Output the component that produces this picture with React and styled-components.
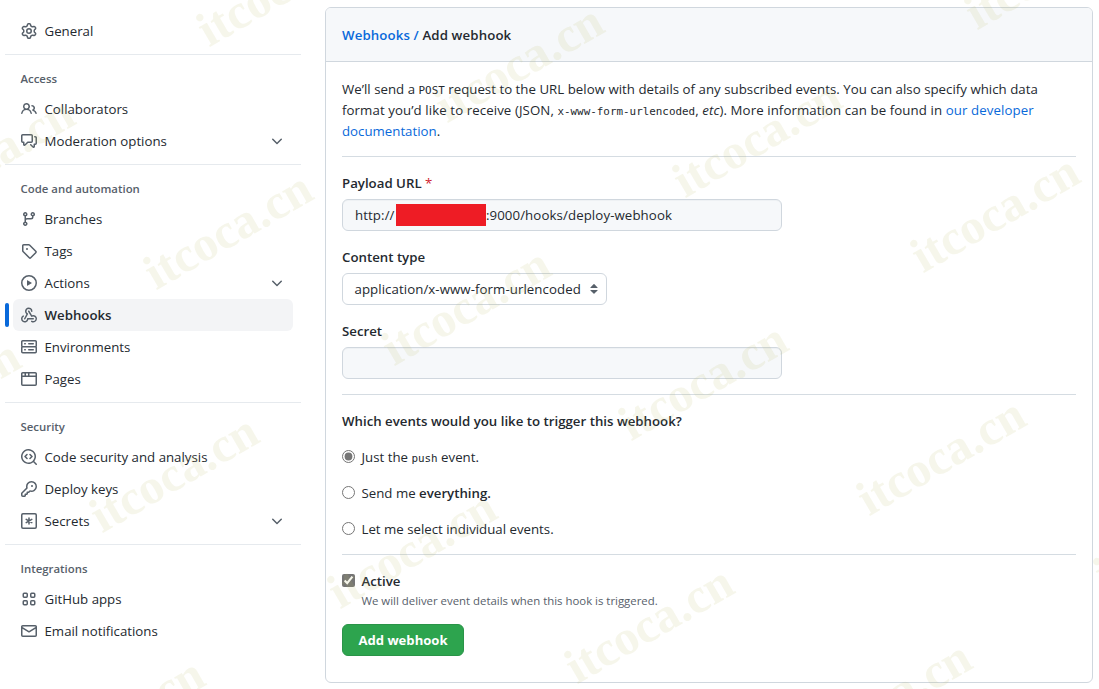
import React from "react";
import styled, { createGlobalStyle, css } from "styled-components";

const GlobalStyle = createGlobalStyle`
  *, *::before, *::after { box-sizing: border-box; }
  body {
    margin: 0;
    background: #fff;
    color: #24292f;
    font: 400 13.25px/21px "Open Sans", "Noto Sans", sans-serif;
  }
`;

const Page = styled.div`
  position: relative;
  display: flex;
  align-items: flex-start;
  gap: 24px;
  width: 1099px;
  height: 689px;
  overflow: hidden;
  padding: 7px 6px 0 5px;
`;

const Sidebar = styled.nav`
  flex: none;
  width: 296px;
  padding-top: 8px;
`;

const NavSection = styled.section`
  & + & {
    margin-top: 7px;
    border-top: 1px solid #e6eaee;
  }
`;

const NavHeading = styled.h3`
  margin: 0;
  padding: 15px 15.5px 5px;
  color: #57606a;
  font-size: 11.4px;
  font-weight: 600;
  line-height: 18px;
`;

const NavItem = styled.a`
  position: relative;
  display: flex;
  align-items: center;
  gap: 7.5px;
  height: 32px;
  margin: 0 8px;
  padding: 0 8px;
  border-radius: 6px;
  ${(p) =>
    p.$active &&
    css`
      background: #f3f4f6;
      font-weight: 600;
      &::before {
        content: "";
        position: absolute;
        top: 4px;
        left: -8px;
        width: 4px;
        height: 24px;
        border-radius: 6px;
        background: #0969da;
      }
    `}
`;

const NavLabel = styled.span`
  flex: 1;
  line-height: 22px;
  white-space: nowrap;
`;

const Glyph = styled.svg`
  flex: none;
  width: 16px;
  height: 16px;
  fill: #57606a;
`;

const Card = styled.main`
  flex: none;
  width: 768px;
  height: 676px;
  border: 1px solid #d0d7de;
  border-radius: 6px;
  overflow: hidden;
`;

const CardHeader = styled.header`
  height: 54px;
  padding: 16px;
  border-bottom: 1px solid #d0d7de;
  background: #f6f8fa;
  font-weight: 600;
  line-height: 22px;
  letter-spacing: 0.12px;
`;

const CardBody = styled.div`
  padding: 17px 16px;
`;

const Link = styled.a`
  color: #0969da;
`;

const Intro = styled.p`
  margin: 0 0 14px;
  white-space: nowrap;
`;

const Line = styled.span`
  display: block;
  letter-spacing: ${(p) => p.$tracking || 0}px;
`;

const Code = styled.code`
  font: 10.9px/1 "DejaVu Sans Mono", monospace;
  letter-spacing: 0;
`;

const Rule = styled.hr`
  height: 1px;
  margin: 0;
  border: 0;
  background: #d5dce2;
`;

const Form = styled.form`
  display: flex;
  flex-direction: column;
`;

const Field = styled.div`
  display: flex;
  flex-direction: column;
  align-items: flex-start;
  gap: 6px;
  margin-top: 16px;
`;

const Fields = styled.div`
  margin-bottom: 15px;
`;

const FieldLabel = styled.label`
  font-weight: 600;
  line-height: 20px;
`;

const Required = styled.span`
  color: #cf222e;
  font-weight: 400;
`;

const TextBox = styled.div`
  display: flex;
  align-items: center;
  width: 440px;
  height: 32px;
  padding: 0 12px;
  border: 1px solid #d0d7de;
  border-radius: 6px;
  background: #f6f8fa;
  box-shadow: inset 0 1px 0 rgba(208, 215, 222, 0.2);
  letter-spacing: 0.1px;
`;

const Redaction = styled.span`
  width: 90px;
  height: 22px;
  margin-left: 1.3px;
  background: #ee1c25;
`;

const SelectBox = styled.div`
  display: flex;
  align-items: center;
  justify-content: space-between;
  width: 265px;
  height: 32px;
  padding: 0 4px 0 11.5px;
  border: 1px solid #d0d7de;
  border-radius: 6px;
  letter-spacing: 0.07px;
`;

const Question = styled.h4`
  margin: 16px 0 0;
  font-size: 13.25px;
  font-weight: 600;
  line-height: 21px;
`;

const Choices = styled.div`
  display: flex;
  flex-direction: column;
  gap: 15px;
  margin: 15px 0 14px;
`;

const Choice = styled.label`
  display: flex;
  align-items: center;
  gap: 6.5px;
  height: 21px;
  font-weight: ${(p) => (p.$strong ? 600 : 400)};
`;

const Toggle = styled.input`
  flex: none;
  width: 13px;
  height: 13px;
  margin: 0;
  accent-color: #757575;
  transform: translateY(-1px);
`;

const ActiveGroup = styled.div`
  margin-top: 16px;
`;

const Note = styled.p`
  margin: 0 0 0 19.5px;
  color: #57606a;
  font-size: 11.4px;
  line-height: 18px;
`;

const SubmitButton = styled.button`
  align-self: flex-start;
  width: 122px;
  height: 32px;
  margin-top: 14px;
  padding: 0 0 1px;
  border: 1px solid #2a9448;
  border-radius: 6px;
  background: #2da44e;
  color: #fff;
  font: 700 13.1px/20px "Open Sans", sans-serif;
`;

const WatermarkLayer = styled.div`
  position: absolute;
  inset: 0;
  overflow: hidden;
  pointer-events: none;
`;

const Watermark = styled.span`
  position: absolute;
  left: ${(p) => p.$x}px;
  top: ${(p) => p.$y}px;
  color: rgba(186, 186, 108, 0.135);
  font: 700 49.3px/50px "Liberation Serif", serif;
  white-space: nowrap;
  transform: translate(9px, -40.5px) rotate(-30deg);
  transform-origin: 0 41px;
`;

const ICONS = {
  gear: "M8 0a8.2 8.2 0 0 1 .701.031C9.444.095 9.99.645 10.16 1.29l.288 1.107c.018.066.079.158.212.224.231.114.454.243.668.386.123.082.233.09.299.071l1.103-.303c.644-.176 1.392.021 1.82.63.27.385.506.792.704 1.218.315.675.111 1.422-.364 1.891l-.814.806c-.049.048-.098.147-.088.294.016.257.016.515 0 .772-.01.147.038.246.088.294l.814.806c.475.469.679 1.216.364 1.891a7.977 7.977 0 0 1-.704 1.217c-.428.61-1.176.807-1.82.63l-1.102-.302c-.067-.019-.177-.011-.3.071a5.909 5.909 0 0 1-.668.386c-.133.066-.194.158-.211.224l-.29 1.106c-.168.646-.715 1.196-1.458 1.26a8.006 8.006 0 0 1-1.402 0c-.743-.064-1.289-.614-1.458-1.26l-.289-1.106c-.018-.066-.079-.158-.212-.224a5.738 5.738 0 0 1-.668-.386c-.123-.082-.233-.09-.299-.071l-1.103.303c-.644.176-1.392-.021-1.82-.63a8.12 8.12 0 0 1-.704-1.218c-.315-.675-.111-1.422.363-1.891l.815-.806c.05-.048.098-.147.088-.294a6.214 6.214 0 0 1 0-.772c.01-.147-.038-.246-.088-.294l-.815-.806C.635 6.045.431 5.298.746 4.623a7.92 7.92 0 0 1 .704-1.217c.428-.61 1.176-.807 1.82-.63l1.102.302c.067.019.177.011.3-.071.214-.143.437-.272.668-.386.133-.066.194-.158.211-.224l.29-1.106C6.009.645 6.556.095 7.299.03 7.53.01 7.764 0 8 0Zm-.571 1.525c-.036.003-.108.036-.137.146l-.289 1.105c-.147.561-.549.967-.998 1.189-.173.086-.34.183-.5.29-.417.278-.97.423-1.529.27l-1.103-.303c-.109-.03-.175.016-.195.045-.22.312-.412.644-.573.99-.014.031-.021.11.059.19l.815.806c.411.406.562.957.53 1.456a4.709 4.709 0 0 0 0 .582c.032.499-.119 1.05-.53 1.456l-.815.806c-.081.08-.073.159-.059.19.162.346.353.677.573.989.02.03.085.076.195.046l1.102-.303c.56-.153 1.113-.008 1.53.27.161.107.328.204.501.29.447.222.85.629.997 1.189l.289 1.105c.029.109.101.143.137.146a6.6 6.6 0 0 0 1.142 0c.036-.003.108-.036.137-.146l.289-1.105c.147-.561.549-.967.998-1.189.173-.086.34-.183.5-.29.417-.278.97-.423 1.529-.27l1.103.303c.109.029.175-.016.195-.045.22-.313.411-.644.573-.99.014-.031.021-.11-.059-.19l-.815-.806c-.411-.406-.562-.957-.53-1.456a4.709 4.709 0 0 0 0-.582c-.032-.499.119-1.05.53-1.456l.815-.806c.081-.08.073-.159.059-.19a6.464 6.464 0 0 0-.573-.989c-.02-.03-.085-.076-.195-.046l-1.102.303c-.56.153-1.113.008-1.53-.27a4.44 4.44 0 0 0-.501-.29c-.447-.222-.85-.629-.997-1.189l-.289-1.105c-.029-.11-.101-.143-.137-.146a6.6 6.6 0 0 0-1.142 0ZM11 8a3 3 0 1 1-6 0 3 3 0 0 1 6 0ZM9.5 8a1.5 1.5 0 1 0-3.001.001A1.5 1.5 0 0 0 9.5 8Z",
  people: "M2 5.5a3.5 3.5 0 1 1 5.898 2.549 5.508 5.508 0 0 1 3.034 4.084.75.75 0 1 1-1.482.235 4 4 0 0 0-7.9 0 .75.75 0 0 1-1.482-.236A5.507 5.507 0 0 1 3.102 8.05 3.493 3.493 0 0 1 2 5.5ZM11 4a3.001 3.001 0 0 1 2.22 5.018 5.01 5.01 0 0 1 2.56 3.012.749.749 0 0 1-.885.954.752.752 0 0 1-.549-.514 3.507 3.507 0 0 0-2.522-2.372.75.75 0 0 1-.574-.73v-.352a.75.75 0 0 1 .416-.672A1.5 1.5 0 0 0 11 5.5.75.75 0 0 1 11 4Zm-5.5-.5a2 2 0 1 0-.001 3.999A2 2 0 0 0 5.5 3.5Z",
  discussion: "M1.75 1h8.5c.966 0 1.75.784 1.75 1.75v5.5A1.75 1.75 0 0 1 10.25 10H7.061l-2.574 2.573A1.458 1.458 0 0 1 2 11.543V10h-.25A1.75 1.75 0 0 1 0 8.25v-5.5C0 1.784.784 1 1.75 1ZM1.5 2.75v5.5c0 .138.112.25.25.25h1a.75.75 0 0 1 .75.75v2.19l2.72-2.72a.749.749 0 0 1 .53-.22h3.5a.25.25 0 0 0 .25-.25v-5.5a.25.25 0 0 0-.25-.25h-8.5a.25.25 0 0 0-.25.25Zm13 2a.25.25 0 0 0-.25-.25h-.5a.75.75 0 0 1 0-1.5h.5c.966 0 1.75.784 1.75 1.75v5.5A1.75 1.75 0 0 1 14.25 12H14v1.543a1.458 1.458 0 0 1-2.487 1.03L9.22 12.28a.749.749 0 0 1 .326-1.275.749.749 0 0 1 .734.215l2.22 2.22v-2.19a.75.75 0 0 1 .75-.75h1a.25.25 0 0 0 .25-.25Z",
  branch: "M9.5 3.25a2.25 2.25 0 1 1 3 2.122V6A2.5 2.5 0 0 1 10 8.5H6a1 1 0 0 0-1 1v1.128a2.251 2.251 0 1 1-1.5 0V5.372a2.25 2.25 0 1 1 1.5 0v1.836A2.493 2.493 0 0 1 6 7h4a1 1 0 0 0 1-1v-.628A2.25 2.25 0 0 1 9.5 3.25Zm-6 0a.75.75 0 1 0 1.5 0 .75.75 0 0 0-1.5 0Zm8.25-.75a.75.75 0 1 0 0 1.5.75.75 0 0 0 0-1.5ZM4.25 12a.75.75 0 1 0 0 1.5.75.75 0 0 0 0-1.5Z",
  tag: "M1 7.775V2.75C1 1.784 1.784 1 2.75 1h5.025c.464 0 .91.184 1.238.513l6.25 6.25a1.75 1.75 0 0 1 0 2.474l-5.026 5.026a1.75 1.75 0 0 1-2.474 0l-6.25-6.25A1.752 1.752 0 0 1 1 7.775Zm1.5 0c0 .066.026.13.073.177l6.25 6.25a.25.25 0 0 0 .354 0l5.025-5.025a.25.25 0 0 0 0-.354l-6.25-6.25a.25.25 0 0 0-.177-.073H2.75a.25.25 0 0 0-.25.25ZM6 5a1 1 0 1 1 0 2 1 1 0 0 1 0-2Z",
  play: "M8 0a8 8 0 1 1 0 16A8 8 0 0 1 8 0ZM1.5 8a6.5 6.5 0 1 0 13 0 6.5 6.5 0 0 0-13 0Zm4.879-2.773 4.264 2.559a.25.25 0 0 1 0 .428l-4.264 2.559A.25.25 0 0 1 6 10.559V5.442a.25.25 0 0 1 .379-.215Z",
  webhook: "M5.5 4.25a2.25 2.25 0 0 1 4.5 0 .75.75 0 0 0 1.5 0 3.75 3.75 0 1 0-6.14 2.889l-2.272 4.258a.75.75 0 0 0 1.324.706L7 7.25a.75.75 0 0 0-.309-1.015A2.25 2.25 0 0 1 5.5 4.25ZM7.364 3.607a.75.75 0 0 1 1.03.257l2.608 4.349a3.75 3.75 0 1 1-.628 6.785.75.75 0 0 1 .752-1.299 2.25 2.25 0 1 0-.033-3.88.75.75 0 0 1-1.03-.256L7.107 4.636a.75.75 0 0 1 .257-1.03ZM2.9 8.776A.75.75 0 0 1 2.625 9.8 2.25 2.25 0 1 0 6 11.75a.75.75 0 0 1 .75-.751h5.5a.75.75 0 0 1 0 1.5H7.425a3.75 3.75 0 1 1-5.55-3.998.75.75 0 0 1 1.024.274Z",
  server: "M1.75 1h12.5c.966 0 1.75.784 1.75 1.75v4c0 .372-.116.717-.314 1 .198.283.314.628.314 1v4a1.75 1.75 0 0 1-1.75 1.75H1.75A1.75 1.75 0 0 1 0 12.75v-4c0-.358.109-.707.314-1a1.739 1.739 0 0 1-.314-1v-4C0 1.784.784 1 1.75 1ZM1.5 2.75v4c0 .138.112.25.25.25h12.5a.25.25 0 0 0 .25-.25v-4a.25.25 0 0 0-.25-.25H1.75a.25.25 0 0 0-.25.25Zm.25 5.75a.25.25 0 0 0-.25.25v4c0 .138.112.25.25.25h12.5a.25.25 0 0 0 .25-.25v-4a.25.25 0 0 0-.25-.25ZM7 4.75A.75.75 0 0 1 7.75 4h4.5a.75.75 0 0 1 0 1.5h-4.5A.75.75 0 0 1 7 4.75ZM7.75 10h4.5a.75.75 0 0 1 0 1.5h-4.5a.75.75 0 0 1 0-1.5ZM3 4.75A.75.75 0 0 1 3.75 4h.5a.75.75 0 0 1 0 1.5h-.5A.75.75 0 0 1 3 4.75ZM3.75 10h.5a.75.75 0 0 1 0 1.5h-.5a.75.75 0 0 1 0-1.5Z",
  browser: "M0 2.75C0 1.784.784 1 1.75 1h12.5c.966 0 1.75.784 1.75 1.75v10.5A1.75 1.75 0 0 1 14.25 15H1.75A1.75 1.75 0 0 1 0 13.25ZM14.5 6h-13v7.25c0 .138.112.25.25.25h12.5a.25.25 0 0 0 .25-.25Zm-6-3.5v2h6V2.75a.25.25 0 0 0-.25-.25ZM5 2.5v2h2v-2Zm-3.25 0a.25.25 0 0 0-.25.25V4.5h2v-2Z",
  codescan: "M8.47 4.97a.75.75 0 0 0 0 1.06L9.94 7.5 8.47 8.97a.75.75 0 1 0 1.06 1.06l2-2a.75.75 0 0 0 0-1.06l-2-2a.75.75 0 0 0-1.06 0ZM6.53 6.03a.75.75 0 0 0-1.06-1.06l-2 2a.75.75 0 0 0 0 1.06l2 2a.75.75 0 1 0 1.06-1.06L5.06 7.5l1.47-1.47ZM12.246 13.307a7.501 7.501 0 1 1 1.06-1.06l2.474 2.473a.749.749 0 0 1-.326 1.275.749.749 0 0 1-.734-.215ZM1.5 7.5a6.002 6.002 0 0 0 3.608 5.504 6.002 6.002 0 0 0 6.486-1.117.748.748 0 0 1 .292-.293A6 6 0 1 0 1.5 7.5Z",
  key: "M10.5 0a5.499 5.499 0 1 1-1.288 10.848l-.932.932a.749.749 0 0 1-.53.22H7v.75a.749.749 0 0 1-.22.53l-.5.5a.749.749 0 0 1-.53.22H5v.75a.749.749 0 0 1-.22.53l-.5.5a.749.749 0 0 1-.53.22h-2A1.75 1.75 0 0 1 0 14.25v-2c0-.199.079-.389.22-.53l4.932-4.932A5.5 5.5 0 0 1 10.5 0Zm-4 5.5c-.001.431.069.86.205 1.269a.75.75 0 0 1-.181.768L1.5 12.56v1.69c0 .138.112.25.25.25h1.69l.06-.06v-1.19a.75.75 0 0 1 .75-.75h1.19l.06-.06v-1.19a.75.75 0 0 1 .75-.75h1.19l1.023-1.025a.75.75 0 0 1 .768-.18A4 4 0 1 0 6.5 5.5ZM11 6a1 1 0 1 1 0-2 1 1 0 0 1 0 2Z",
  mail: "M1.75 2h12.5c.966 0 1.75.784 1.75 1.75v8.5A1.75 1.75 0 0 1 14.25 14H1.75A1.75 1.75 0 0 1 0 12.25v-8.5C0 2.784.784 2 1.75 2ZM1.5 12.251c0 .138.112.25.25.25h12.5a.25.25 0 0 0 .25-.25V5.809L8.38 9.397a.75.75 0 0 1-.76 0L1.5 5.809v6.442Zm13-8.181v-.32a.25.25 0 0 0-.25-.25H1.75a.25.25 0 0 0-.25.25v.32L8 7.88Z",
  chevron: "M12.78 5.72a.749.749 0 0 1 0 1.06l-4.25 4.25a.749.749 0 0 1-1.06 0L3.22 6.78a.749.749 0 1 1 1.06-1.06L8 9.439l3.72-3.719a.749.749 0 0 1 1.06 0Z",
  updown: "m4.427 9.427 3.396 3.396a.251.251 0 0 0 .354 0l3.396-3.396A.25.25 0 0 0 11.396 9H4.604a.25.25 0 0 0-.177.427ZM4.423 6.47 7.82 3.072a.25.25 0 0 1 .354 0L11.57 6.47a.25.25 0 0 1-.177.427H4.6a.25.25 0 0 1-.177-.427Z",
};

const OUTLINES = {
  asterisk: (
    <g fill="none" stroke="#57606a" strokeWidth="1.5" strokeLinecap="round">
      <rect x="0.75" y="0.75" width="14.5" height="14.5" rx="1.2" />
      <path d="M8 4.9v6.2M5.2 6.4l5.6 3.2M10.8 6.4l-5.6 3.2" />
    </g>
  ),
  apps: (
    <g fill="none" stroke="#57606a" strokeWidth="1.5">
      <rect x="2.25" y="2.25" width="4" height="4" rx="0.9" />
      <rect x="9.75" y="2.25" width="4" height="4" rx="0.9" />
      <rect x="2.25" y="9.75" width="4" height="4" rx="0.9" />
      <rect x="9.75" y="9.75" width="4" height="4" rx="0.9" />
    </g>
  ),
};

function Icon({ name }) {
  return (
    <Glyph viewBox="0 0 16 16" aria-hidden="true">
      {OUTLINES[name] || <path d={ICONS[name]} />}
    </Glyph>
  );
}

const NAV = [
  { items: [["gear", "General"]] },
  {
    title: "Access",
    items: [["people", "Collaborators"], ["discussion", "Moderation options", true]],
  },
  {
    title: "Code and automation",
    items: [
      ["branch", "Branches"],
      ["tag", "Tags"],
      ["play", "Actions", true],
      ["webhook", "Webhooks"],
      ["server", "Environments"],
      ["browser", "Pages"],
    ],
  },
  {
    title: "Security",
    items: [
      ["codescan", "Code security and analysis"],
      ["key", "Deploy keys"],
      ["asterisk", "Secrets", true],
    ],
  },
  {
    title: "Integrations",
    items: [["apps", "GitHub apps"], ["mail", "Email notifications"]],
  },
];

const WATERMARKS = [
  [200, 47], [438, 123], [676, 198], [914, 273], [968, 30],
  [-91, 215], [147, 290], [385, 366], [622, 441], [860, 516], [1097, 591],
  [-145, 458], [93, 533], [331, 609], [568, 684], [806, 759], [39, 776],
];

export default function App() {
  return (
    <Page>
      <GlobalStyle />
      <Sidebar>
        {NAV.map(({ title, items }) => (
          <NavSection key={title || "top"}>
            {title && <NavHeading>{title}</NavHeading>}
            {items.map(([icon, label, expandable]) => (
              <NavItem key={label} $active={label === "Webhooks"}>
                <Icon name={icon} />
                <NavLabel>{label}</NavLabel>
                {expandable && <Icon name="chevron" />}
              </NavItem>
            ))}
          </NavSection>
        ))}
      </Sidebar>

      <Card>
        <CardHeader>
          <Link>Webhooks /</Link> Add webhook
        </CardHeader>
        <CardBody>
          <Intro>
            <Line $tracking={0.02}>
              We’ll send a <Code>POST</Code> request to the URL below with details of any
              subscribed events. You can also specify which data
            </Line>
            <Line $tracking={0.09}>
              format you’d like to receive (JSON, <Code>x-www-form-urlencoded</Code>,{" "}
              <em>etc</em>). More information can be found in <Link>our developer</Link>
            </Line>
            <Line>
              <Link>documentation</Link>.
            </Line>
          </Intro>
          <Rule />
          <Form>
            <Fields>
              <Field>
                <FieldLabel>
                  Payload URL <Required>*</Required>
                </FieldLabel>
                <TextBox>
                  http://
                  <Redaction />
                  :9000/hooks/deploy-webhook
                </TextBox>
              </Field>
              <Field>
                <FieldLabel>Content type</FieldLabel>
                <SelectBox>
                  application/x-www-form-urlencoded
                  <Icon name="updown" />
                </SelectBox>
              </Field>
              <Field>
                <FieldLabel>Secret</FieldLabel>
                <TextBox />
              </Field>
            </Fields>
            <Rule />
            <Question>Which events would you like to trigger this webhook?</Question>
            <Choices>
              <Choice>
                <Toggle type="radio" name="events" defaultChecked />
                <span>
                  Just the <Code>push</Code> event.
                </span>
              </Choice>
              <Choice>
                <Toggle type="radio" name="events" />
                <span>
                  Send me <FieldLabel as="strong">everything.</FieldLabel>
                </span>
              </Choice>
              <Choice>
                <Toggle type="radio" name="events" />
                <span>Let me select individual events.</span>
              </Choice>
            </Choices>
            <Rule />
            <ActiveGroup>
              <Choice $strong>
                <Toggle type="checkbox" defaultChecked />
                <span>Active</span>
              </Choice>
              <Note>We will deliver event details when this hook is triggered.</Note>
            </ActiveGroup>
            <SubmitButton type="button">Add webhook</SubmitButton>
          </Form>
        </CardBody>
      </Card>

      <WatermarkLayer aria-hidden="true">
        {WATERMARKS.map(([x, y]) => (
          <Watermark key={`${x},${y}`} $x={x} $y={y}>
            itcoca.cn
          </Watermark>
        ))}
      </WatermarkLayer>
    </Page>
  );
}
